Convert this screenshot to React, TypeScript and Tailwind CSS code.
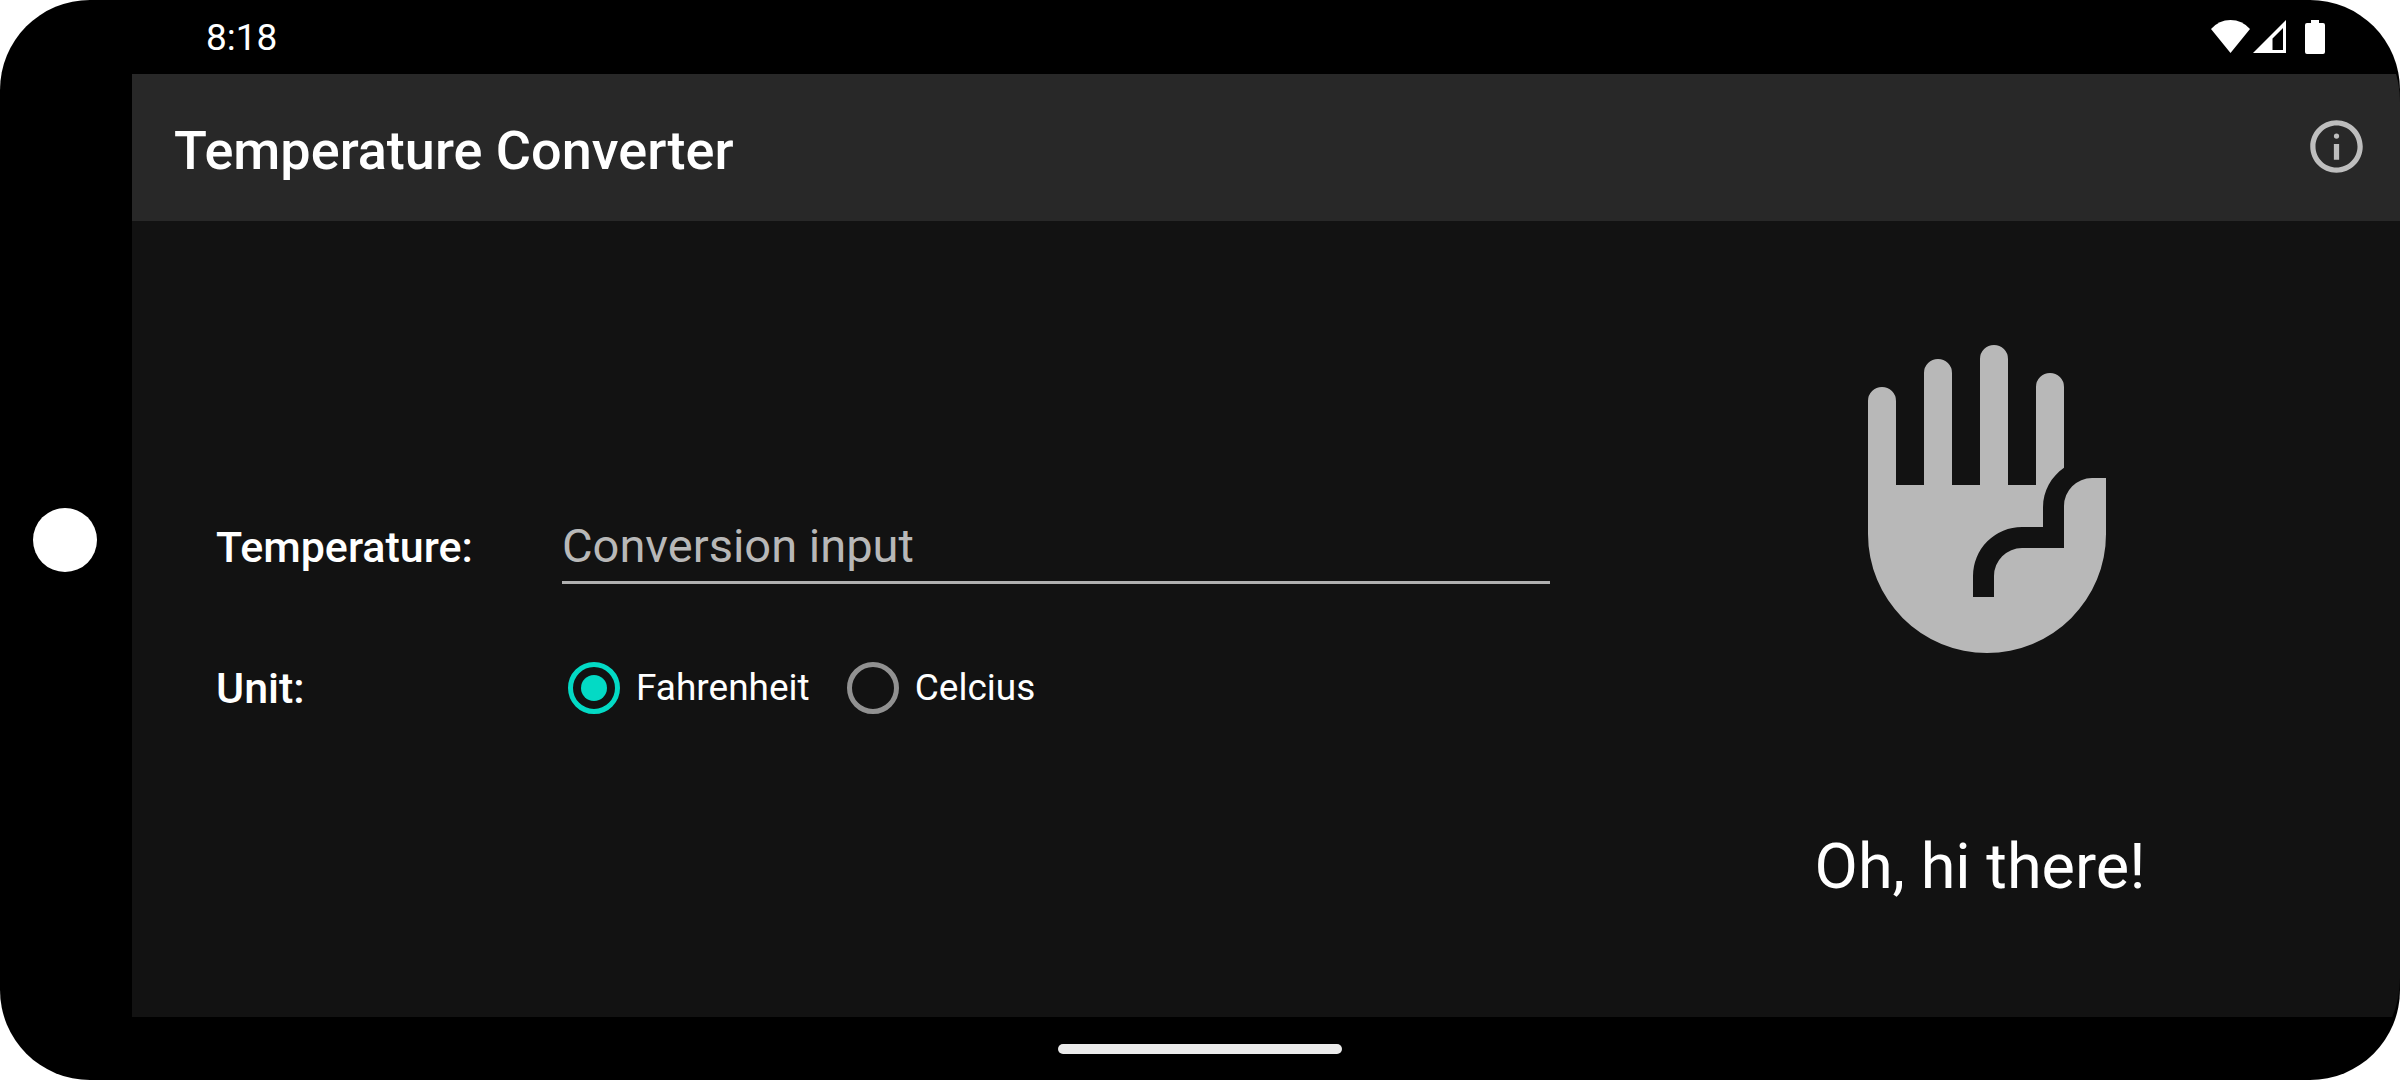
import { useState } from "react";

function WifiIcon() {
  return (
    <svg viewBox="0 0 39 33" className="h-[33px] w-[39px] fill-white" aria-hidden="true">
      <path d="M0 9Q8 0 19.500 0T39 9L19.500 33Z" />
    </svg>
  );
}

function SignalIcon() {
  return (
    <svg viewBox="0 0 33 33" className="h-[33px] w-[33px] fill-white" aria-hidden="true">
      <path fillRule="evenodd" d="M33 0V33H0ZM30 8L19.500 18.500V30H30Z" />
    </svg>
  );
}

function BatteryIcon() {
  return (
    <svg viewBox="0 0 20 34" className="h-[34px] w-5 fill-white" aria-hidden="true">
      <path d="M6 0H14V3H18A2 2 0 0 1 20 5V32A2 2 0 0 1 18 34H2A2 2 0 0 1 0 32V5A2 2 0 0 1 2 3H6Z" />
    </svg>
  );
}

function InfoIcon() {
  return (
    <svg viewBox="0 0 24 24" className="size-[63px] fill-[#bebebe]" aria-hidden="true">
      <circle cx="12" cy="8" r="1" />
      <path d="M11 11h2v6h-2zm1-9C6.480 2 2 6.480 2 12s4.480 10 10 10 10-4.480 10-10S17.520 2 12 2zm0 18c-4.410 0-8-3.590-8-8s3.590-8 8-8 8 3.590 8 8-3.590 8-8 8z" />
    </svg>
  );
}

function HandIcon() {
  return (
    <svg viewBox="0 0 24 24" className="size-[336px] fill-[#b8b8b8]" role="img" aria-label="Waving hand">
      <path d="M4 14.500V5a1 1 0 0 1 2 0v6h2V3a1 1 0 0 1 2 0v8h2V2a1 1 0 0 1 2 0v9h2V4a1 1 0 0 1 2 0v5.760C17.090 10.400 16.500 11.400 16.500 12.600V14H15a3.500 3.500 0 0 0-3.500 3.500V19H13V17.500a2 2 0 0 1 2-2h3v-3a2 2 0 0 1 2-2h1v4a8.500 8.500 0 0 1-17 0z" />
    </svg>
  );
}

const radioClass =
  "grid size-[52px] appearance-none place-content-center rounded-full border-[5px] border-[#919191] before:size-[26px] before:rounded-full checked:border-[#03dac5] checked:before:bg-[#03dac5]";

export default function App() {
  const [unit, setUnit] = useState("Fahrenheit");
  const [value, setValue] = useState("");

  return (
    <div className="min-h-screen bg-white font-['Roboto',sans-serif] text-white">
      <div className="relative flex min-h-screen flex-col rounded-[90px] bg-black">
        <div className="flex flex-1 flex-col overflow-hidden rounded-[102px]">
          <div className="flex h-[74px] items-center justify-between pr-[75px] pl-[206px]">
            <time className="text-[37px] leading-none">8:18</time>
            <div className="flex items-start">
              <WifiIcon />
              <span className="ml-[3px]">
                <SignalIcon />
              </span>
              <span className="ml-[19px]">
                <BatteryIcon />
              </span>
            </div>
          </div>

          <div className="ml-[132px] flex flex-1 flex-col bg-[#121212]">
            <header className="flex h-[147px] items-center justify-between bg-[#282828] pr-8 pb-[2px] pl-[42px]">
              <h1 className="pt-2 text-[54px] leading-[64px] font-medium">Temperature Converter</h1>
              <button type="button" aria-label="About">
                <InfoIcon />
              </button>
            </header>

            <main className="grid flex-1 grid-cols-[17fr_10fr]">
              <form className="flex flex-col justify-center gap-[76px] pr-[10px] pb-[6px] pl-[84px]">
                <div className="flex items-baseline">
                  <label htmlFor="temperature" className="w-[346px] text-[43px] leading-[56px] font-medium">
                    Temperature:
                  </label>
                  <input
                    id="temperature"
                    type="text"
                    inputMode="decimal"
                    value={value}
                    onChange={(e) => setValue(e.target.value)}
                    placeholder="Conversion input"
                    className="min-w-0 flex-1 border-b-[3px] border-[#b0b0b0] bg-transparent pb-[5px] text-[47px] leading-[60px] outline-none placeholder:text-[#b8b8b8]"
                  />
                </div>
                <div role="radiogroup" aria-labelledby="unit-label" className="flex items-center">
                  <span id="unit-label" className="w-[352px] text-[43px] leading-[56px] font-medium">
                    Unit:
                  </span>
                  <label className="flex items-center gap-4 text-[37px] leading-[56px]">
                    <input
                      type="radio"
                      name="unit"
                      checked={unit === "Fahrenheit"}
                      onChange={() => setUnit("Fahrenheit")}
                      className={radioClass}
                    />
                    Fahrenheit
                  </label>
                  <label className="ml-[37px] flex items-center gap-4 text-[37px] leading-[56px]">
                    <input
                      type="radio"
                      name="unit"
                      checked={unit === "Celcius"}
                      onChange={() => setUnit("Celcius")}
                      className={radioClass}
                    />
                    Celcius
                  </label>
                </div>
              </form>

              <section className="flex flex-col items-center justify-center gap-[158px] pt-[2px]">
                <HandIcon />
                <p className="text-[63px] leading-[84px]">Oh, hi there!</p>
              </section>
            </main>
          </div>

          <footer className="flex h-[63px] items-center justify-center">
            <div className="h-[10px] w-[284px] rounded-full bg-[#ebebeb]" />
          </footer>
        </div>

        <div className="absolute top-1/2 left-[33px] size-16 -translate-y-1/2 rounded-full bg-white" />
      </div>
    </div>
  );
}
